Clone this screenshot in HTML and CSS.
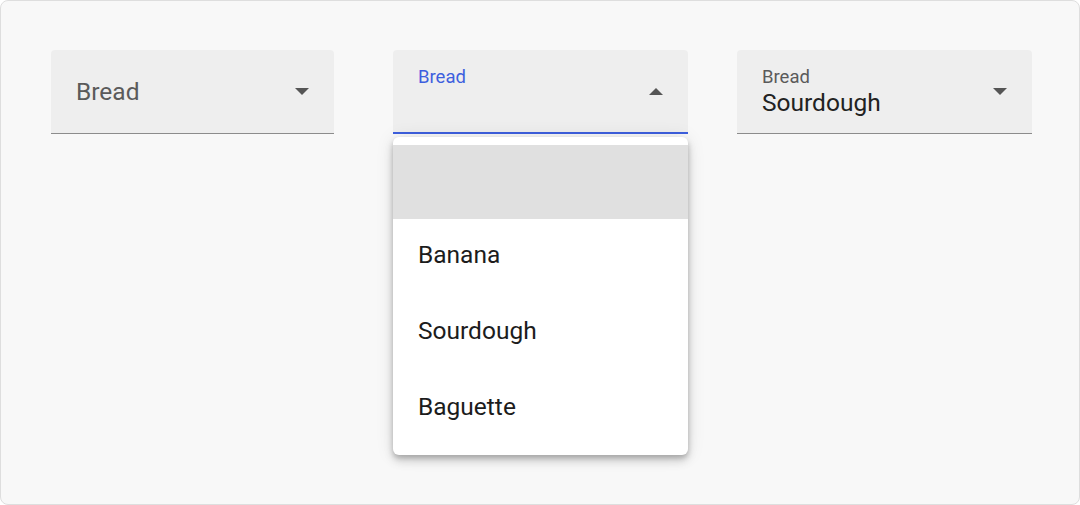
FILE: index.html
```html
<!DOCTYPE html>
<html>
<head>
<meta charset="utf-8">
<link rel="stylesheet" href="styles.css">
</head>
<body>
<div class="frame">
  <div class="row">
    <div class="field field-a">
      <span class="value placeholder">Bread</span>
      <svg class="arrow" viewBox="0 0 14 7" width="14" height="7"><path d="M0 0 L14 0 L7 7 Z"/></svg>
    </div>
    <div class="field field-b focused">
      <div class="stack">
        <span class="label blue">Bread</span>
        <span class="value"></span>
      </div>
      <svg class="arrow" viewBox="0 0 14 7" width="14" height="7"><path d="M0 7 L14 7 L7 0 Z"/></svg>
      <div class="menu">
        <div class="item selected"></div>
        <div class="item">Banana</div>
        <div class="item">Sourdough</div>
        <div class="item">Baguette</div>
      </div>
    </div>
    <div class="field field-c">
      <div class="stack">
        <span class="label">Bread</span>
        <span class="value filled">Sourdough</span>
      </div>
      <svg class="arrow" viewBox="0 0 14 7" width="14" height="7"><path d="M0 0 L14 0 L7 7 Z"/></svg>
    </div>
  </div>
</div>
</body>
</html>
```

FILE: styles.css
```css
* { box-sizing: border-box; }
html, body { margin: 0; padding: 0; background: #ffffff; }
body { font-family: Roboto, "Liberation Sans", sans-serif; }

.frame {
  width: 1080px;
  height: 505px;
  border: 1px solid #dedede;
  border-radius: 8px;
  background: #f8f8f8;
  overflow: hidden;
}

.row {
  display: flex;
  padding-top: 49px;
  padding-left: 50px;
}

.field {
  position: relative;
  height: 84px;
  background: #eeeeee;
  border-radius: 4px 4px 0 0;
  border-bottom: 1px solid #8c8c8c;
  display: flex;
  align-items: center;
  padding: 0 25px 0 25px;
}

.field-a { width: 283px; }
.field-b { width: 295px; margin-left: 59px; border-bottom: 2px solid #3d5fde; }
.field-c { width: 295px; margin-left: 49px; }

.value {
  flex: 1;
  font-size: 24.5px;
  color: #222;
}
.placeholder { color: #5a5a5a; }

.stack {
  flex: 1;
  display: flex;
  flex-direction: column;
  align-self: flex-start;
  padding-top: 17px;
}

.label {
  font-size: 18.5px;
  line-height: 20px;
  color: #5a5a5a;
}
.label.blue { color: #3d5fde; }

.filled {
  font-size: 24.5px;
  line-height: 32px;
  color: #222;
}

.arrow {
  fill: #555;
  flex: none;
}

.menu {
  position: absolute;
  top: 87px;
  left: 0;
  width: 100%;
  background: #ffffff;
  border-radius: 6px;
  padding: 8px 0;
  box-shadow: 0 6px 10px rgba(0,0,0,0.14), 0 1px 18px rgba(0,0,0,0.10), 0 3px 5px rgba(0,0,0,0.18);
}

.item {
  height: 76px;
  display: flex;
  align-items: center;
  padding-left: 25px;
  padding-bottom: 6px;
  font-size: 24.5px;
  color: #1c1c1c;
}
.item.selected { background: #e0e0e0; height: 74px; padding-bottom: 0; }
```
